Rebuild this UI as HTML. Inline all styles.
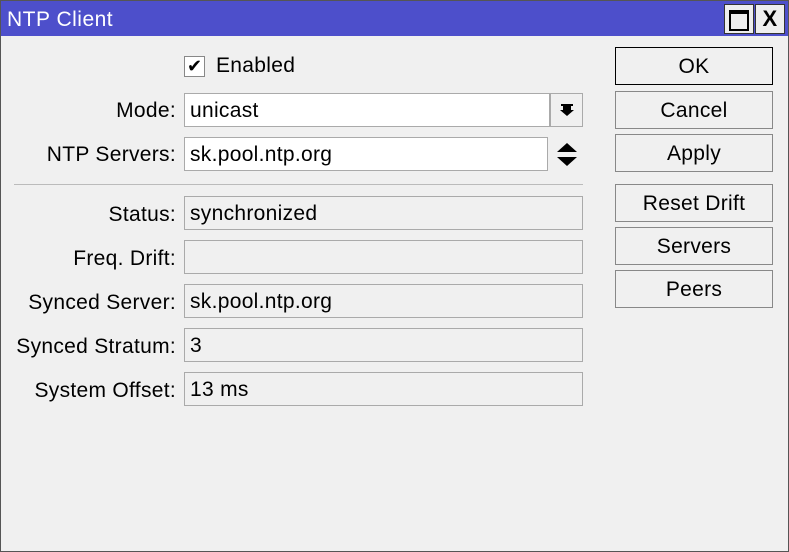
<html><head><style>
body{margin:0;width:789px;height:552px;overflow:hidden;font-family:"Liberation Sans",sans-serif;font-size:21px;color:#000;letter-spacing:0.3px}
.win{position:absolute;left:0;top:0;width:787px;height:550px;border:1px solid #555;background:#f0f0f0}
.title{position:absolute;left:0;top:0;width:787px;height:35px;background:#4d4fcb;color:#fff}
.title span{position:absolute;left:6px;top:7px;font-size:21px;letter-spacing:0.5px}
.tb{position:absolute;top:3px;width:30px;height:30px;background:#eee;border:1px solid #333;box-sizing:border-box}
.a{position:absolute}
.lbl{position:absolute;right:612px;text-align:right;white-space:nowrap}
.f{position:absolute;left:183px;width:399px;height:34px;box-sizing:border-box;border:1px solid #aaa;padding:5px 0 0 5px}
.btn{position:absolute;left:614px;width:158px;height:38px;box-sizing:border-box;border:1px solid #888;background:#f0f0f0;text-align:center;padding-top:7px}
</style></head><body><div class="win">
<div class="title"><span>NTP Client</span>
<div class="tb" style="left:723px"><div class="a" style="left:4px;top:5px;width:16px;height:15px;border:2px solid #000;border-top-width:4px;background:#eee"></div></div>
<div class="tb" style="left:754px;font-size:22px;font-weight:bold;text-align:center;line-height:28px;color:#000">X</div></div>
<div class="a" style="left:183px;top:55px;width:21px;height:21px;border:1px solid #888;background:#fff;box-sizing:border-box;text-align:center;font-size:18px;line-height:19px;letter-spacing:0">✔</div>
<div class="a" style="left:215px;top:53px">Enabled</div>
<div class="lbl" style="top:98px">Mode:</div>
<div class="f" style="top:92px;width:366px;background:#fff">unicast</div>
<div class="a" style="left:549px;top:92px;width:33px;height:34px;box-sizing:border-box;border:1px solid #aaa"><svg width="31" height="32"><rect x="10" y="10" width="12" height="2"/><path d="M12 12h8v4h3l-7 6-7-6h3z"/></svg></div>
<div class="lbl" style="top:142px">NTP Servers:</div>
<div class="f" style="top:136px;width:364px;background:#fff">sk.pool.ntp.org</div>
<svg class="a" style="left:554px;top:140px" width="24" height="28"><path d="M2 11L12 2 22 11z M2 16L12 25 22 16z"/></svg>
<div class="a" style="left:13px;top:183px;width:569px;height:1px;background:#bbb"></div>
<div class="lbl" style="top:202px">Status:</div><div class="f" style="top:195px">synchronized</div>
<div class="lbl" style="top:246px">Freq. Drift:</div><div class="f" style="top:239px"></div>
<div class="lbl" style="top:290px">Synced Server:</div><div class="f" style="top:283px">sk.pool.ntp.org</div>
<div class="lbl" style="top:334px">Synced Stratum:</div><div class="f" style="top:327px">3</div>
<div class="lbl" style="top:378px">System Offset:</div><div class="f" style="top:371px">13 ms</div>
<div class="btn" style="top:46px;border-color:#000">OK</div>
<div class="btn" style="top:90px">Cancel</div>
<div class="btn" style="top:133px">Apply</div>
<div class="btn" style="top:183px">Reset Drift</div>
<div class="btn" style="top:226px">Servers</div>
<div class="btn" style="top:269px">Peers</div>
</div></body></html>
